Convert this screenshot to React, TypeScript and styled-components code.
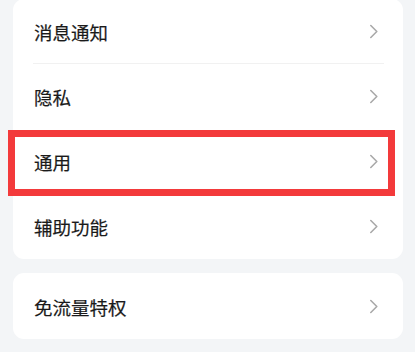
import React from "react";
import styled, { createGlobalStyle } from "styled-components";

const Global = createGlobalStyle`
  html, body { margin: 0; padding: 0; background: #f3f5f7; }
  body { font-family: "Noto Sans CJK SC", "Noto Sans", sans-serif; }
  * { box-sizing: border-box; }
`;

const Page = styled.div`
  width: 415px;
  height: 352px;
  overflow: hidden;
  background: #f3f5f7;
  padding: 0 12px 0 13px;
  display: flex;
  flex-direction: column;
  gap: 14px;
`;

const Card = styled.div<{ $top?: number }>`
  background: #ffffff;
  border-radius: 11px;
  margin-top: ${(p) => p.$top ?? 0}px;
  display: flex;
  flex-direction: column;
`;

const Row = styled.div<{ $h?: number }>`
  position: relative;
  height: ${(p) => p.$h ?? 65}px;
  display: flex;
  align-items: center;
  justify-content: space-between;
  padding: 0 24px 0 21px;
`;

const Label = styled.span`
  font-size: 18.5px;
  font-weight: 400;
  color: #1a1a1a;
  letter-spacing: 0;
  line-height: 1;
  margin-top: 2px;
  -webkit-text-stroke: 0.2px #1a1a1a;
`;

const Divider = styled.div`
  position: absolute;
  left: 20px;
  right: 19px;
  bottom: 0;
  height: 1px;
  background: #f1f1f1;
`;

const Highlight = styled.div`
  position: absolute;
  left: -5px;
  right: 8px;
  top: 1px;
  bottom: -2px;
  border: 7px solid #f33a3b;
  pointer-events: none;
`;

const Chevron = () => (
  <svg width="10" height="15" viewBox="0 0 10 15" fill="none">
    <path d="M1.8 1.5 L7.8 7.5 L1.8 13.5" stroke="#a9a9a9" strokeWidth="1.6" strokeLinecap="round" strokeLinejoin="round" />
  </svg>
);

const items = [
  { label: "消息通知", divider: true },
  { label: "隐私" },
  { label: "通用", highlight: true },
  { label: "辅助功能" },
];

export default function App() {
  return (
    <>
      <Global />
      <Page>
        <Card $top={-1}>
          {items.map((it) => (
            <Row key={it.label}>
              <Label>{it.label}</Label>
              <Chevron />
              {it.divider && <Divider />}
              {it.highlight && <Highlight />}
            </Row>
          ))}
        </Card>
        <Card>
          <Row $h={66}>
            <Label>免流量特权</Label>
            <Chevron />
          </Row>
        </Card>
      </Page>
    </>
  );
}
